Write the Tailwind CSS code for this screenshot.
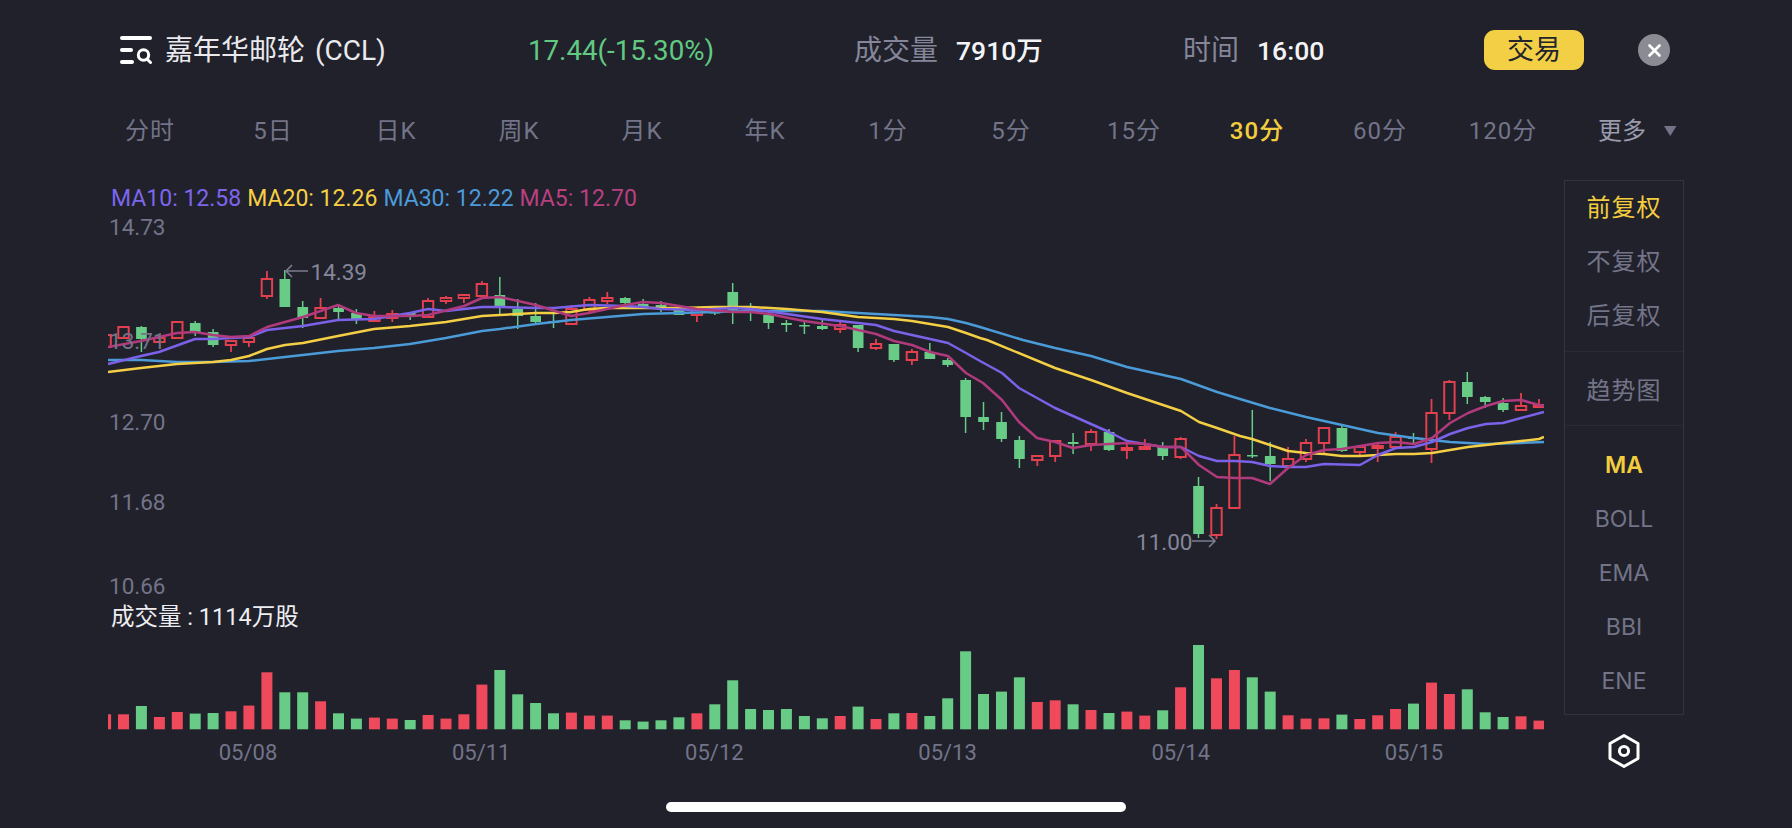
<!DOCTYPE html>
<html lang="zh">
<head>
<meta charset="utf-8">
<title>CCL</title>
<script src="https://cdn.jsdelivr.net/npm/@tailwindcss/browser@4"></script>
</head>
<body class="m-0 w-[1792px] h-[828px] overflow-hidden bg-[#20212b] font-[Roboto,'Noto_Sans_CJK_SC',sans-serif] text-[#737488]">
<header class="flex h-[100px] items-center pl-[120px]">
  <div class="flex w-[408px] items-center">
    <svg class="h-[28px] w-[32px]" viewBox="0 0 32 28" fill="none"><rect width="32" height="4" rx="2" fill="#fff"/><rect y="12" width="13" height="4" rx="2" fill="#fff"/><rect y="24" width="14" height="4" rx="2" fill="#fff"/><circle cx="23.5" cy="19" r="5.2" stroke="#fff" stroke-width="3"/><path d="M27 23l3.5 3.5" stroke="#fff" stroke-width="3" stroke-linecap="round"/></svg>
    <span class="ml-[13px] pt-[2px] text-[28px] leading-none text-[#eaeaee] [word-spacing:3px]">嘉年华邮轮 (CCL)</span>
  </div>
  <div class="w-[326px] pt-[2px] text-[27.7px] leading-none text-[#62c982]">17.44(-15.30%)</div>
  <div class="flex w-[329px] items-center pt-[2px] text-[28px] leading-none text-[#85869a]">成交量<span class="ml-[18px] text-[26.5px] font-medium text-[#f4f4f6]">7910万</span></div>
  <div class="flex w-[301px] items-center pt-[2px] text-[28px] leading-none text-[#85869a]">时间<span class="ml-[18px] text-[26.5px] font-medium text-[#f4f4f6]">16:00</span></div>
  <button class="flex h-[40px] w-[100px] items-center justify-center rounded-[11px] bg-[#f2cf44] text-[27px] leading-none text-[#23242c]">交易</button>
  <div class="ml-[54px] flex h-[32px] w-[32px] items-center justify-center rounded-full bg-[#8b8c93]">
    <svg class="h-[13px] w-[13px]" viewBox="0 0 13 13"><path d="M1.5 1.5l10 10M11.5 1.5l-10 10" stroke="#fff" stroke-width="2.6" stroke-linecap="round"/></svg>
  </div>
</header>

<nav class="ml-[88.5px] flex h-[62px] items-center text-[24px] leading-none tracking-[1px]">
  <div class="w-[123px] text-center">分时</div>
  <div class="w-[123px] text-center">5日</div>
  <div class="w-[123px] text-center">日K</div>
  <div class="w-[123px] text-center">周K</div>
  <div class="w-[123px] text-center">月K</div>
  <div class="w-[123px] text-center">年K</div>
  <div class="w-[123px] text-center">1分</div>
  <div class="w-[123px] text-center">5分</div>
  <div class="w-[123px] text-center">15分</div>
  <div class="w-[123px] text-center font-medium text-[#f4cd3e]">30分</div>
  <div class="w-[123px] text-center">60分</div>
  <div class="w-[123px] text-center">120分</div>
  <div class="flex w-[123px] items-center pl-[33.5px] tracking-normal text-[#9a9bac]">更多<svg class="ml-[18px] h-[10px] w-[12.5px]" viewBox="0 0 12.5 10"><path d="M0 0h12.5L6.25 10z" fill="#737488"/></svg></div>
</nav>

<main class="flex h-[614px] pl-[108px]">
  <section class="w-[1436px]">
    <div class="mt-[22px] flex h-[28px] items-center gap-[6px] pl-[3px] text-[23px] leading-none">
      <span class="text-[#7d66ec]">MA10: 12.58</span>
      <span class="text-[#f6cf45]">MA20: 12.26</span>
      <span class="text-[#4c9ad9]">MA30: 12.22</span>
      <span class="text-[#b9407f]">MA5: 12.70</span>
    </div>

    <div class="relative h-[392px] w-[1436px]">
      <svg class="block h-[392px] w-[1436px]" viewBox="108 212 1436 392" fill="none">
        <g id="candles"></g>
        <polyline stroke="#4a9bd8" stroke-width="2.5" stroke-linejoin="round" points="108,360 141,360 177,362 213,362 249,361 285,357 338,351 374,348 410,344 446,338 482,331 500,329 536,324 571,320 607,317 643,314 679,313 715,312 751,311 787,311 822,311 858,313 894,315 930,317 948,319 966,323 980,327 1023,340 1055,348 1091,356 1127,367 1163,375 1181,379 1217,392 1240,399 1270,408 1306,417 1342,425 1378,433 1414,438 1450,442 1486,444 1521,443 1544,442"/>
        <polyline stroke="#f4ce44" stroke-width="2.5" stroke-linejoin="round" points="108,372 141,368 177,364 213,362 231,360 249,356 267,349 285,345 303,343 338,336 374,329 410,326 446,322 482,316 500,315 536,313 554,313 571,312 589,309 607,308 643,308 679,308 715,307 751,307 787,309 822,312 858,317 894,319 912,321 930,324 948,327 966,333 980,338 987,340 1055,368 1091,380 1127,393 1163,405 1181,411 1199,422 1217,428 1240,436 1252,439 1270,445 1288,451 1306,453 1324,454 1342,456 1360,456 1378,455 1396,454 1414,454 1432,453 1450,450 1468,447 1486,445 1503,443 1521,441 1539,439 1544,437"/>
        <polyline stroke="#7b62e8" stroke-width="2.5" stroke-linejoin="round" points="108,364 141,356 159,352 195,339 213,339 249,337 267,330 303,326 338,320 374,319 410,313 428,309 446,311 482,307 500,307 536,308 554,308 589,305 625,306 643,307 661,309 697,310 733,308 751,309 787,314 822,319 858,323 876,325 894,331 912,335 930,339 948,343 966,353 980,361 1002,373 1019,388 1055,408 1091,424 1109,432 1127,441 1145,444 1163,447 1181,447 1199,456 1217,461 1235,461 1252,462 1270,466 1288,467 1306,467 1324,464 1360,465 1378,455 1396,448 1414,447 1432,442 1450,434 1468,428 1486,424 1503,423 1521,418 1544,412"/>
        <polyline stroke="#b03a7c" stroke-width="2.5" stroke-linejoin="round" points="108,347 141,341 177,333 195,332 213,335 231,337 249,336 267,327 303,317 338,305 356,313 374,316 410,316 428,315 464,306 482,298 500,297 536,305 571,316 589,313 625,305 643,302 661,303 679,306 697,309 733,312 751,312 769,314 804,321 840,326 876,334 894,341 912,345 930,352 948,356 966,373 983,383 1002,400 1019,422 1037,438 1055,442 1073,448 1091,445 1109,444 1127,443 1145,444 1163,447 1181,447 1199,465 1217,477 1235,478 1252,478 1270,484 1288,468 1306,455 1324,450 1342,449 1360,446 1378,443 1396,442 1414,444 1432,438 1450,423 1468,413 1486,406 1503,401 1521,400 1539,405 1544,406"/>
        <path d="M308 271H286M292 265l-6 6 6 6" stroke="#7b7c8e" stroke-width="1.6"/>
        <path d="M1192 541h23M1209 535l6 6-6 6" stroke="#7b7c8e" stroke-width="1.6"/>
      </svg>
      <span class="absolute left-[1px] top-[2px] text-[22.5px] leading-[26px]">14.73</span>
      <span class="absolute left-[1px] top-[116px] text-[22.5px] leading-[26px]">13.71</span>
      <span class="absolute left-[1px] top-[197px] text-[22.5px] leading-[26px]">12.70</span>
      <span class="absolute left-[1px] top-[277px] text-[22.5px] leading-[26px]">11.68</span>
      <span class="absolute left-[1px] top-[361px] text-[22.5px] leading-[26px]">10.66</span>
      <span class="absolute left-[202.5px] top-[47px] text-[22.5px] leading-[26px] text-[#85869a]">14.39</span>
      <span class="absolute left-[1028px] top-[317px] text-[22.5px] leading-[26px] text-[#85869a]">11.00</span>
    </div>

    <div class="flex h-[26px] items-center pl-[3px] pt-[2px] text-[23.5px] leading-none text-[#eeeef1]">成交量 : 1114万股</div>
    <svg class="block h-[100px] w-[1436px]" viewBox="108 630 1436 100"><g id="volume"></g></svg>
    <div class="flex h-[46px] items-center gap-[173.2px] pl-[110px] text-[22px] leading-none text-[#737488]">
      <span class="w-[60px] text-center">05/08</span>
      <span class="w-[60px] text-center">05/11</span>
      <span class="w-[60px] text-center">05/12</span>
      <span class="w-[60px] text-center">05/13</span>
      <span class="w-[60px] text-center">05/14</span>
      <span class="w-[60px] text-center">05/15</span>
    </div>
  </section>

  <aside class="ml-[20px] w-[120px]">
    <div class="mt-[18px] h-[535px] w-[120px] border border-[#33343c] text-center text-[24px] leading-none">
      <div class="border-b border-[#2a2b34] pb-[8px]">
        <div class="flex h-[54px] items-center justify-center tracking-[1px] text-[#f4cd3e]">前复权</div>
        <div class="flex h-[54px] items-center justify-center tracking-[1px]">不复权</div>
        <div class="flex h-[54px] items-center justify-center tracking-[1px]">后复权</div>
      </div>
      <div class="border-b border-[#2a2b34] pb-[7px] pt-[12px]">
        <div class="flex h-[54px] items-center justify-center tracking-[1px]">趋势图</div>
      </div>
      <div class="pt-[12px] font-[Inter,sans-serif] text-[23px]">
        <div class="flex h-[54px] items-center justify-center font-semibold text-[#f4cd3e]">MA</div>
        <div class="flex h-[54px] items-center justify-center">BOLL</div>
        <div class="flex h-[54px] items-center justify-center">EMA</div>
        <div class="flex h-[54px] items-center justify-center">BBI</div>
        <div class="flex h-[54px] items-center justify-center">ENE</div>
      </div>
    </div>
    <svg class="mx-auto mt-[18px] h-[36px] w-[34px]" viewBox="0 0 34 36" fill="none"><path d="M17 2.5L31 10.5V25.5L17 33.5L3 25.5V10.5Z" stroke="#fff" stroke-width="3" stroke-linejoin="round"/><circle cx="17" cy="18" r="4.6" stroke="#fff" stroke-width="3"/></svg>
  </aside>
</main>

<div class="mx-auto mt-[26px] h-[10px] w-[460px] rounded-full bg-white"></div>

<script>
const G='#68cb86',R='#e2404f',VR='#ef4a5c',X=i=>105.6+17.917*i;
const c=[[0,335,335,347,347],[0,327,327,338,338],[1,326,327,339,352],[0,336,338,342,343],[0,321,322,338,338],[1,321,323,332,336],[1,329,332,345,347],[0,341,341,345,352],[0,338,338,342,347],[0,271,279,296,299],[1,270,279,307,307],[1,301,307,318,328],[0,298,308,318,319],[1,305,308,312,319],[1,309,313,319,324],[0,311,317,321,321],[0,310,314,318,322],[1,313,313,316,320],[0,298,301,317,317],[0,296,298,301,304],[0,294,295,298,303],[0,281,284,296,296],[1,277,295,308,314],[1,299,309,316,329],[1,303,316,322,325],[1,313,321,322,328],[0,305,309,324,324],[0,297,300,310,313],[0,292,298,301,304],[1,297,298,303,306],[1,299,304,307,308],[1,301,305,309,312],[1,307,310,315,315],[0,309,310,315,322],[1,312,312,313,315],[1,283,292,310,324],[1,303,310,313,321],[1,310,315,323,329],[1,320,323,325,332],[1,322,325,326,334],[1,320,326,329,330],[0,321,325,329,333],[1,325,325,348,352],[0,339,344,348,350],[1,344,344,360,362],[0,349,352,360,365],[1,343,352,359,359],[1,358,360,365,367],[1,378,380,417,433],[1,402,417,422,430],[1,412,422,439,442],[1,436,440,459,468],[0,455,456,460,466],[0,441,441,456,462],[1,433,442,444,454],[0,429,432,444,451],[1,429,432,450,451],[0,443,448,450,459],[0,439,447,449,449],[1,442,447,456,460],[0,437,439,457,459],[1,477,486,534,538],[0,504,508,535,539],[0,436,455,508,508],[1,410,455,456,458],[1,442,456,464,481],[0,447,459,466,468],[0,439,443,459,462],[0,428,428,443,455],[1,425,428,451,452],[0,445,447,452,457],[0,443,446,448,462],[0,432,437,447,447],[1,433,437,439,443],[0,399,413,449,463],[0,380,382,413,420],[1,372,382,397,404],[1,396,397,402,408],[1,398,403,410,412],[0,393,406,410,410],[0,399,405,407,408]];
let s='';
c.forEach((d,i)=>{const x=X(i).toFixed(1),[g,h,t,b,l]=d;
  if(g){s+=`<path d="M${x} ${h}V${l}" stroke="${G}" stroke-width="1.5"/><rect x="${x-5.3}" y="${t}" width="10.7" height="${Math.max(b-t,1.5)}" fill="${G}"/>`;}
  else{s+=`<path d="M${x} ${h}V${t}M${x} ${b}V${l}" stroke="${R}" stroke-width="1.8"/><rect x="${x-5.2}" y="${t}" width="10.4" height="${b-t}" fill="none" stroke="${R}" stroke-width="2"/>`;}
});
document.getElementById('candles').innerHTML=s;
const v=[45,45,70,37,52,47,49,54,71,171,111,111,84,48,32,35,32,28,43,32,45,134,178,105,79,48,50,41,41,27,23,27,36,48,75,147,61,58,61,40,33,40,68,31,48,49,40,93,234,106,113,156,82,87,75,58,49,53,41,57,126,253,153,178,156,113,42,32,33,44,31,42,61,77,140,106,120,51,37,39,26];
const up=[0,0,1,0,0,1,1,0,0,0,1,1,0,1,1,0,0,1,0,0,0,0,1,1,1,1,0,0,0,1,1,1,1,0,1,1,1,1,1,1,1,0,1,0,1,0,1,1,1,1,1,1,0,0,1,0,1,0,0,1,0,1,0,0,1,1,0,0,0,1,0,0,0,1,0,0,1,1,1,0,0];
let w='';
v.forEach((d,i)=>{const h=d/3;w+=`<rect x="${(X(i)-5.5).toFixed(1)}" y="${(729.3-h).toFixed(1)}" width="11" height="${h.toFixed(1)}" fill="${up[i]?G:VR}"/>`;});
document.getElementById('volume').innerHTML=w;
</script>
</body>
</html>
